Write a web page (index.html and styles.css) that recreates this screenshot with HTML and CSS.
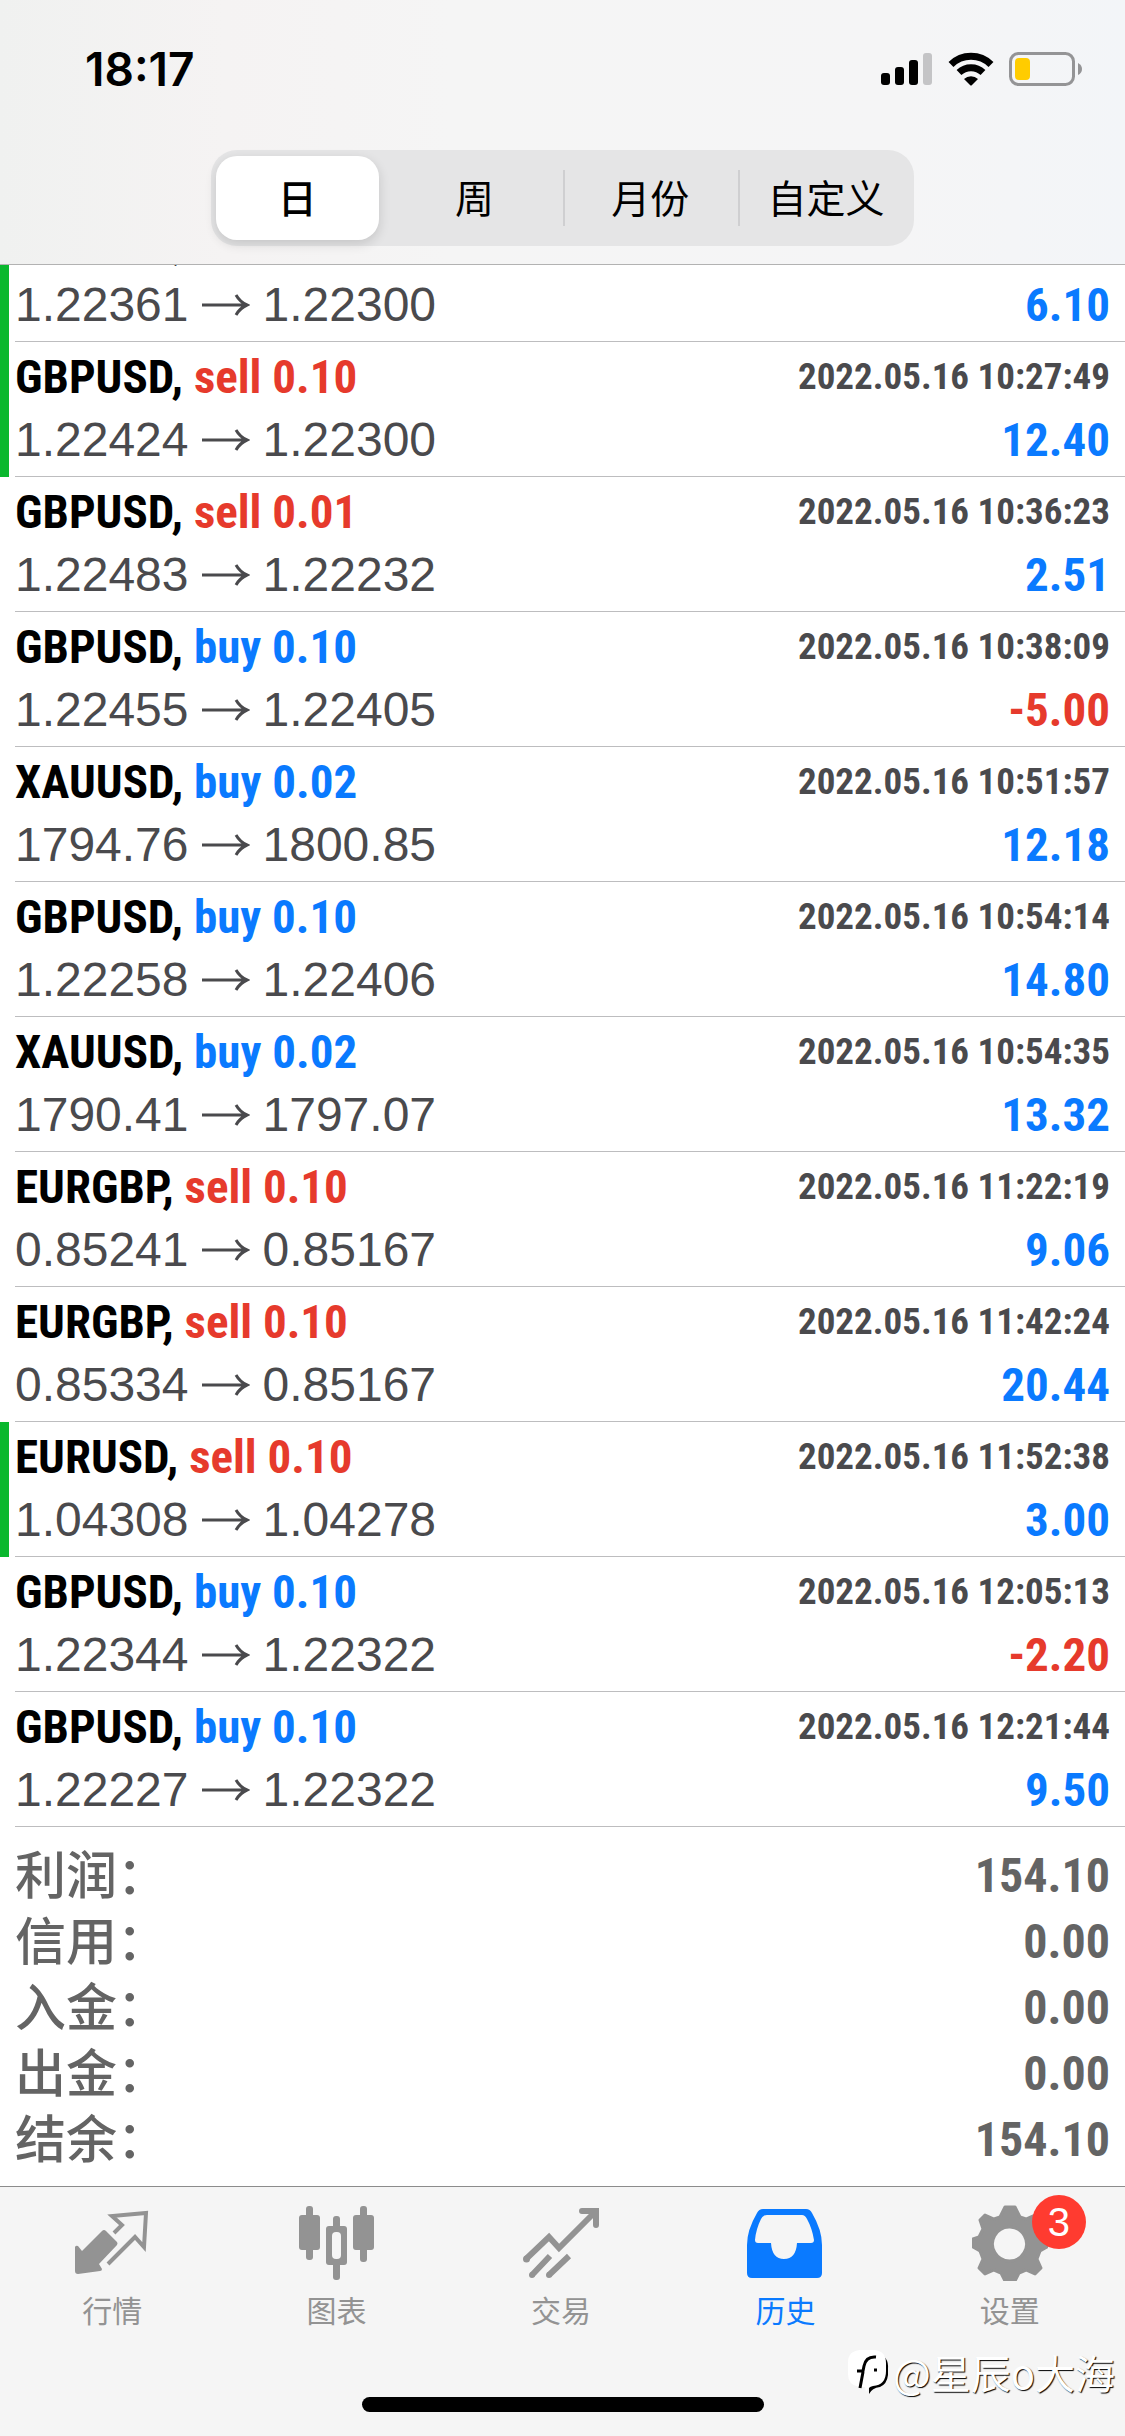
FILE: index.html
```html
<!DOCTYPE html>
<html lang="zh-CN">
<head>
<meta charset="utf-8">
<meta name="viewport" content="width=device-width, initial-scale=1">
<title>历史</title>
<link rel="stylesheet" href="styles.css">
</head>
<body>
<header class="top">
  <div class="status">
    <time class="clock">18:17</time>
    <div class="status-icons">
      <svg width="52" height="34" viewBox="0 0 52 34" aria-hidden="true"><rect x="0" y="21" width="9" height="12" rx="3"/><rect x="14" y="15" width="9" height="18" rx="3"/><rect x="28" y="8" width="9" height="25" rx="3"/><rect x="42" y="1" width="9" height="32" rx="3" fill="#c4c4c6"/></svg>
      <svg width="46" height="34" viewBox="0 0 46 34" aria-hidden="true"><g fill="none" stroke="#000" stroke-width="7"><path d="M3 12.500a28.500 28.500 0 0 1 40 0"/><path d="M11 20.500a17.500 17.500 0 0 1 24 0"/></g><path d="M16 27a10.500 10.500 0 0 1 14 0l-6 6q-1 1-2 0z"/></svg>
      <svg width="74" height="34" viewBox="0 0 74 34" aria-hidden="true"><rect x="1.500" y="1.500" width="63" height="31" rx="8" fill="none" stroke="#949496" stroke-width="3"/><rect x="6" y="6" width="15" height="22" rx="4" fill="#fc0"/><path d="M69 11q4 2 4 6t-4 6z" fill="#949496"/></svg>
    </div>
  </div>
  <div class="segments">
    <button type="button" class="segment segment-on" aria-pressed="true">日</button>
    <button type="button" class="segment">周</button>
    <button type="button" class="segment segment-line">月份</button>
    <button type="button" class="segment segment-line">自定义</button>
  </div>
</header>

<main class="history">
  <ul class="deals" id="deals"></ul>
  <dl class="totals">
    <div class="total"><dt>利润：</dt><dd>154.10</dd></div>
    <div class="total"><dt>信用：</dt><dd>0.00</dd></div>
    <div class="total"><dt>入金：</dt><dd>0.00</dd></div>
    <div class="total"><dt>出金：</dt><dd>0.00</dd></div>
    <div class="total"><dt>结余：</dt><dd>154.10</dd></div>
  </dl>
</main>

<footer class="bottom">
  <nav class="tabs">
    <a class="tab" href="#quotes">
      <svg width="76" height="76" viewBox="0 0 76 76" aria-hidden="true"><path d="M28 26q2-2 4 0l11 11q1 1.500 0 3L25 59l3 5q0 2-2 2L4 69q-3 0-3-3L1 42q1-2 3-1l4 5z" fill="currentColor"/><path d="M40 28l8-8-10-9 34-3-2 34-9-10-27 27" fill="none" stroke="currentColor" stroke-width="4"/></svg>
      <span>行情</span>
    </a>
    <a class="tab" href="#charts">
      <svg width="76" height="76" viewBox="0 0 76 76" aria-hidden="true"><g fill="currentColor"><rect x="0" y="10" width="21" height="35" rx="3"/><rect x="7" y="1" width="7" height="54" rx="3"/><rect x="54" y="10" width="21" height="35" rx="3"/><rect x="61" y="1" width="7" height="56" rx="3"/><rect x="34" y="11" width="7" height="64" rx="3"/><rect x="27" y="21" width="21" height="39" rx="3"/></g><rect x="33" y="27" width="9" height="27" rx="4" fill="#f5f5f5"/></svg>
      <span>图表</span>
    </a>
    <a class="tab" href="#trade">
      <svg width="76" height="76" viewBox="0 0 76 76" aria-hidden="true"><g fill="none" stroke="currentColor" stroke-width="6"><path d="M3 54l23-22 10 11L71 8" /><path d="M9 70l18-19M26 70l20-19"/><path d="M59 6h14v14" stroke-linecap="round"/></g><g fill="currentColor"><circle cx="3.500" cy="54" r="3.500"/><circle cx="9" cy="70" r="3"/><circle cx="26" cy="70" r="3"/></g></svg>
      <span>交易</span>
    </a>
    <a class="tab tab-on" href="#history" aria-current="page">
      <svg width="76" height="76" viewBox="0 0 76 76" aria-hidden="true"><path fill="currentColor" fill-rule="evenodd" d="M16 4h43q4 0 6 4 10 17 10 32v28q0 5-5 5H5q-5 0-5-5V40Q0 25 10 8q2-4 6-4zm4 6q-4 0-6 4Q9 24 8 35q0 3 3 3h13q1 16 13 16t13-16h14q3 0 3-3-2-12-7-21-2-4-5-4z"/></svg>
      <span>历史</span>
    </a>
    <a class="tab" href="#settings">
      <span class="gear">
        <svg width="76" height="76" viewBox="0 0 76 76" aria-hidden="true"><path fill="currentColor" stroke="currentColor" stroke-width="3" stroke-linejoin="round" fill-rule="evenodd" d="M33 2h10l5 10 6 2 9-4 5 5-3 9 4 8 6 2v8l-7 4-3 8 4 9-6 6-9-4-7 3-4 8H33l-4-8-7-3-9 4-6-6 4-9-3-8-7-4v-8l6-2 4-8-3-9 5-5 9 4 6-2zM37 22a17 17 0 1 0 1 0z"/></svg>
        <b class="badge">3</b>
      </span>
      <span>设置</span>
    </a>
  </nav>
  <div class="home-bar"></div>
  <div class="credit">
    <svg width="44" height="46" viewBox="0 0 44 46" aria-hidden="true"><path d="M30 4q12 3 11 16v6q-1 9-8 12-8 1-11 7v-6z" fill="#000"/><path d="M13 1h14q12 1 12 13v8q0 14-13 15-5 1-7 6l-1-5h-6Q1 36 1 25V13Q1 2 13 1z" fill="#fff"/><path d="M29 8q-10-1-12 9l-1 5H10M16 23l-3 16M27 21h3" fill="none" stroke="#000" stroke-width="3"/></svg>
    <span>@星辰o大海</span>
  </div>
</footer>
<script src="deals.js"></script>
</body>
</html>
```
FILE: styles.css
```css
* { box-sizing: border-box; }

body {
  margin: 0;
  min-height: 100vh;
  display: flex;
  flex-direction: column;
  background: #fff;
  color: #000;
  font-family: "Liberation Sans", "Noto Sans CJK SC", sans-serif;
}

/* top bar */
.top {
  position: sticky;
  top: 0;
  z-index: 1;
  padding-bottom: 18px;
  border-bottom: 1px solid #b2b2b2;
  background: linear-gradient(90deg, #f0f1f0, #f5f3f3 20%, #f5f5f5 40%, #f5f5f6 80%, #f3f5f8);
}
.status {
  display: flex;
  justify-content: space-between;
  align-items: center;
  height: 150px;
  padding: 0 42px 12px 85px;
}
.clock { font: 600 46px/50px Inter, sans-serif; }
.status-icons { display: flex; align-items: center; gap: 15px; }
.segments {
  display: grid;
  grid-template-columns: repeat(4, 1fr);
  margin: 0 211px;
  padding: 6px 0;
  border-radius: 26px;
  background: #e5e5e6;
}
.segment {
  position: relative;
  height: 84px;
  margin: 0;
  padding: 0 0 4px;
  border: 0;
  background: none;
  color: #000;
  font: 400 39px/80px "Noto Sans CJK SC", sans-serif;
}
.segment-on {
  margin: 0 8px 0 5px;
  border-radius: 21px;
  background: #fff;
  box-shadow: 0 4px 12px rgba(0, 0, 0, .14);
  font-weight: 500;
}
.segment-line::before {
  content: "";
  position: absolute;
  left: 0;
  top: 14px;
  bottom: 14px;
  width: 2px;
  background: #cfcfd1;
}

/* closed deals */
.history { flex: 1; }
.deals {
  margin: -58px 0 0;
  padding: 0;
  list-style: none;
}
.deal { border-left: 9px solid transparent; }
.deal-tp { border-left-color: #0ab82e; }
.deal-body {
  display: grid;
  grid-template-columns: 1fr auto;
  grid-template-rows: 70px 64px;
  margin-left: 6px;
  padding-right: 15px;
  border-bottom: 1px solid #bdbdbf;
}
.deal-name, .deal-time, .deal-profit, .total dd {
  font-family: "Roboto Condensed", Roboto, sans-serif;
  font-weight: 700;
}
.deal-name { font-size: 47px; line-height: 70px; }
.deal-time { font-size: 37px; line-height: 70px; color: #4a4a4d; text-align: right; }
.deal-price {
  display: flex;
  align-items: center;
  align-self: start;
  font-size: 48px;
  line-height: 56px;
  color: #4a4a4d;
}
.arrow { margin: 0 13px; }
.deal-profit { font-size: 47px; line-height: 56px; text-align: right; }
.blue { color: #0a7aff; }
.red { color: #e63a2c; }

/* totals */
.totals { margin: 0; padding: 16px 15px 12px; }
.total { display: flex; justify-content: space-between; color: #646464; }
.total dt { font: 500 51px/58px "Noto Sans CJK SC", sans-serif; }
.total dd { margin: 0; font-size: 48px; line-height: 66px; }

/* bottom bar */
.bottom {
  position: relative;
  border-top: 1px solid #8c8c8c;
  background: #f5f5f5;
}
.tabs { display: grid; grid-template-columns: repeat(5, 1fr); height: 210px; padding: 18px 3px 0 0; }
.tab {
  display: flex;
  flex-direction: column;
  align-items: center;
  color: #939393;
  font: 400 30px/56px "Noto Sans CJK SC", sans-serif;
  text-decoration: none;
}
.tab svg { display: block; }
.tab-on { color: #0a7aff; }
.gear { position: relative; }
.badge {
  position: absolute;
  left: 60px;
  top: -10px;
  width: 54px;
  border-radius: 27px;
  background: #ff3b30;
  color: #fff;
  font: 400 40px/54px "Liberation Sans", sans-serif;
  text-align: center;
}
.home-bar {
  width: 402px;
  height: 15px;
  margin: 0 auto 24px;
  border-radius: 8px;
  background: #000;
}
.credit {
  position: absolute;
  right: 10px;
  bottom: 38px;
  display: flex;
  align-items: center;
  gap: 2px;
  color: #fff;
  font: 400 40px/52px "Noto Sans CJK SC", sans-serif;
  text-shadow: 1px 1px 1px #000;
}
```
FILE: deals.js
```js
const deals = [
  ["GBPUSD", "sell 0.10", "2022.05.16 10:22:10", "1.22361", "1.22300", "6.10", true],
  ["GBPUSD", "sell 0.10", "2022.05.16 10:27:49", "1.22424", "1.22300", "12.40", true],
  ["GBPUSD", "sell 0.01", "2022.05.16 10:36:23", "1.22483", "1.22232", "2.51", false],
  ["GBPUSD", "buy 0.10", "2022.05.16 10:38:09", "1.22455", "1.22405", "-5.00", false],
  ["XAUUSD", "buy 0.02", "2022.05.16 10:51:57", "1794.76", "1800.85", "12.18", false],
  ["GBPUSD", "buy 0.10", "2022.05.16 10:54:14", "1.22258", "1.22406", "14.80", false],
  ["XAUUSD", "buy 0.02", "2022.05.16 10:54:35", "1790.41", "1797.07", "13.32", false],
  ["EURGBP", "sell 0.10", "2022.05.16 11:22:19", "0.85241", "0.85167", "9.06", false],
  ["EURGBP", "sell 0.10", "2022.05.16 11:42:24", "0.85334", "0.85167", "20.44", false],
  ["EURUSD", "sell 0.10", "2022.05.16 11:52:38", "1.04308", "1.04278", "3.00", true],
  ["GBPUSD", "buy 0.10", "2022.05.16 12:05:13", "1.22344", "1.22322", "-2.20", false],
  ["GBPUSD", "buy 0.10", "2022.05.16 12:21:44", "1.22227", "1.22322", "9.50", false]
];

const arrow = '<svg class="arrow" width="48" height="24" viewBox="0 0 48 24" aria-hidden="true"><path d="M0 12h44M34 2q4 7 11 10-7 3-11 10" fill="none" stroke="currentColor" stroke-width="3"/></svg>';

document.getElementById("deals").innerHTML = deals.map(([symbol, side, time, open, close, profit, tp]) => `
  <li class="deal${tp ? " deal-tp" : ""}">
    <div class="deal-body">
      <span class="deal-name">${symbol}, <span class="${side.startsWith("buy") ? "blue" : "red"}">${side}</span></span>
      <time class="deal-time">${time}</time>
      <span class="deal-price">${open}${arrow}${close}</span>
      <span class="deal-profit ${profit.startsWith("-") ? "red" : "blue"}">${profit}</span>
    </div>
  </li>`).join("");
```
